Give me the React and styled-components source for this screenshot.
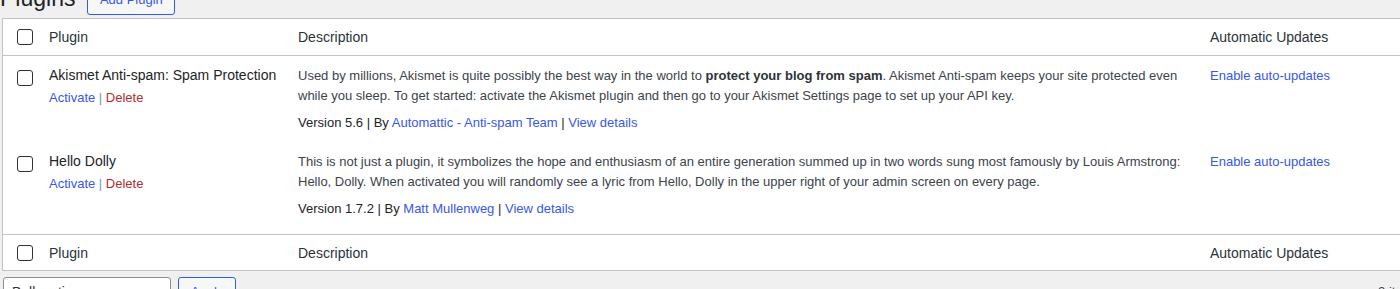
import React from "react";
import styled, { createGlobalStyle } from "styled-components";

const Global = createGlobalStyle`
  html, body { margin: 0; padding: 0; }
  body {
    background: #f0f0f1;
    font-family: "Liberation Sans", Arial, sans-serif;
    color: #3c434a;
    overflow: hidden;
    width: 1400px;
    height: 289px;
  }
  * { box-sizing: border-box; }
`;

const Page = styled.div`
  width: 1424px;
  display: flex;
  flex-direction: column;
`;

const HeadingRow = styled.div`
  display: flex;
  align-items: flex-start;
  margin-top: -17px;
`;

const Title = styled.h1`
  margin: 0;
  font-size: 23px;
  font-weight: 400;
  line-height: 30px;
  color: #1d2327;
`;

const OutlineButton = styled.a`
  display: inline-flex;
  align-items: center;
  height: 30px;
  margin-top: ${(p) => p.$mt || 0}px;
  margin-left: ${(p) => p.$ml || 0}px;
  padding: 0 ${(p) => p.$px || 10}px;
  border: 1px solid #3858e9;
  border-radius: 3px;
  background: #f6f7f7;
  color: #3858e9;
  font-size: 13px;
  line-height: 28px;
  text-decoration: none;
  white-space: nowrap;
`;

const Table = styled.table`
  margin: 3px 0 0 2px;
  width: 1420px;
  table-layout: fixed;
  border-collapse: separate;
  border-spacing: 0;
  border: 1px solid #c3c4c7;
  background: #fff;
`;

const HeadCell = styled.th`
  width: ${(p) => (p.$w ? `${p.$w}px` : "auto")};
  padding: ${(p) => (p.$check ? "0" : "0 10px")};
  height: ${(p) => (p.$foot ? 36 : 37)}px;
  text-align: left;
  font-weight: 400;
  font-size: 14px;
  line-height: 20px;
  color: #2c3338;
  vertical-align: middle;
  border-bottom: ${(p) => (p.$foot ? "none" : "1px solid #c3c4c7")};
  border-top: ${(p) => (p.$foot ? "1px solid #c3c4c7" : "none")};
`;

const Cell = styled.td`
  vertical-align: top;
  padding: ${(p) => (p.$check ? "0" : "9px 10px 0")};
  padding-bottom: ${(p) => (p.$last ? 16 : 10)}px;
`;

const Check = styled.input.attrs({ type: "checkbox" })`
  appearance: none;
  -webkit-appearance: none;
  display: block;
  width: 16px;
  height: 16px;
  margin: ${(p) => (p.$top != null ? `${p.$top}px 0 0 14px` : "0 0 0 14px")};
  border: 1px solid #2c3338;
  border-radius: 3px;
  background: #fff;
`;

const PluginName = styled.div`
  font-size: 14px;
  line-height: 20px;
  color: #1d2327;
  white-space: nowrap;
`;

const RowActions = styled.div`
  margin-top: 3px;
  font-size: 13px;
  line-height: 19.5px;
  color: #8c8f94;
`;

const Link = styled.a`
  color: ${(p) => (p.$danger ? "#b32d2e" : "#3858e9")};
  text-decoration: none;
`;

const Desc = styled.p`
  margin: 1px 0 0;
  font-size: 13px;
  line-height: 20px;
  color: #3c434a;
  strong { font-weight: 700; color: #2c3338; }
`;

const Meta = styled.div`
  margin-top: 7px;
  font-size: 13px;
  line-height: 19px;
  color: #1d2327;
`;

const AutoLink = styled.div`
  margin-top: 1px;
  font-size: 13px;
  line-height: 20px;
`;

const Toolbar = styled.div`
  display: flex;
  align-items: center;
  margin: 6px 0 0 3px;
  width: 1420px;
  height: 30px;
  gap: 7px;
`;

const Select = styled.div`
  width: 168px;
  height: 30px;
  border: 1px solid #8c8f94;
  border-radius: 3px;
  background: #fff;
  padding: 0 8px;
  font-size: 14px;
  line-height: 28px;
  color: #2c3338;
`;

const Count = styled.div`
  margin-left: auto;
  margin-right: 3px;
  font-size: 13px;
  line-height: 30px;
  color: #3c434a;
`;

const plugins = [
  {
    name: "Akismet Anti-spam: Spam Protection",
    desc: (
      <>
        Used by millions, Akismet is quite possibly the best way in the world to{" "}
        <strong>protect your blog from spam</strong>. Akismet Anti-spam keeps your site protected even
        while you sleep. To get started: activate the Akismet plugin and then go to your Akismet Settings
        page to set up your API key.
      </>
    ),
    version: "5.6",
    author: "Automattic - Anti-spam Team",
  },
  {
    name: "Hello Dolly",
    desc: (
      <>
        This is not just a plugin, it symbolizes the hope and enthusiasm of an entire generation summed up
        in two words sung most famously by Louis Armstrong: Hello, Dolly. When activated you will randomly
        see a lyric from Hello, Dolly in the upper right of your admin screen on every page.
      </>
    ),
    version: "1.7.2",
    author: "Matt Mullenweg",
  },
];

function HeaderRow({ foot }) {
  return (
    <tr>
      <HeadCell $w={36} $check $foot={foot}>
        <Check />
      </HeadCell>
      <HeadCell $w={249} $foot={foot}>Plugin</HeadCell>
      <HeadCell $w={912} $foot={foot}>Description</HeadCell>
      <HeadCell $foot={foot}>Automatic Updates</HeadCell>
    </tr>
  );
}

export default function App() {
  return (
    <>
      <Global />
      <Page>
        <HeadingRow>
          <Title>Plugins</Title>
          <OutlineButton href="#" $mt={2} $ml={12} $px={11.5}>
            Add Plugin
          </OutlineButton>
        </HeadingRow>
        <Table>
          <thead>
            <HeaderRow />
          </thead>
          <tbody>
            {plugins.map((p, i) => {
              const last = i === plugins.length - 1;
              return (
                <tr key={p.name}>
                  <Cell $check $last={last}>
                    <Check $top={14} />
                  </Cell>
                  <Cell $last={last}>
                    <PluginName>{p.name}</PluginName>
                    <RowActions>
                      <Link href="#">Activate</Link> | <Link href="#" $danger>Delete</Link>
                    </RowActions>
                  </Cell>
                  <Cell $last={last}>
                    <Desc>{p.desc}</Desc>
                    <Meta>
                      Version {p.version} | By <Link href="#">{p.author}</Link> |{" "}
                      <Link href="#">View details</Link>
                    </Meta>
                  </Cell>
                  <Cell $last={last}>
                    <AutoLink>
                      <Link href="#">Enable auto-updates</Link>
                    </AutoLink>
                  </Cell>
                </tr>
              );
            })}
          </tbody>
          <tfoot>
            <HeaderRow foot />
          </tfoot>
        </Table>
        <Toolbar>
          <Select>Bulk actions</Select>
          <OutlineButton href="#" $px={11.75}>Apply</OutlineButton>
          <Count>2 items</Count>
        </Toolbar>
      </Page>
    </>
  );
}
